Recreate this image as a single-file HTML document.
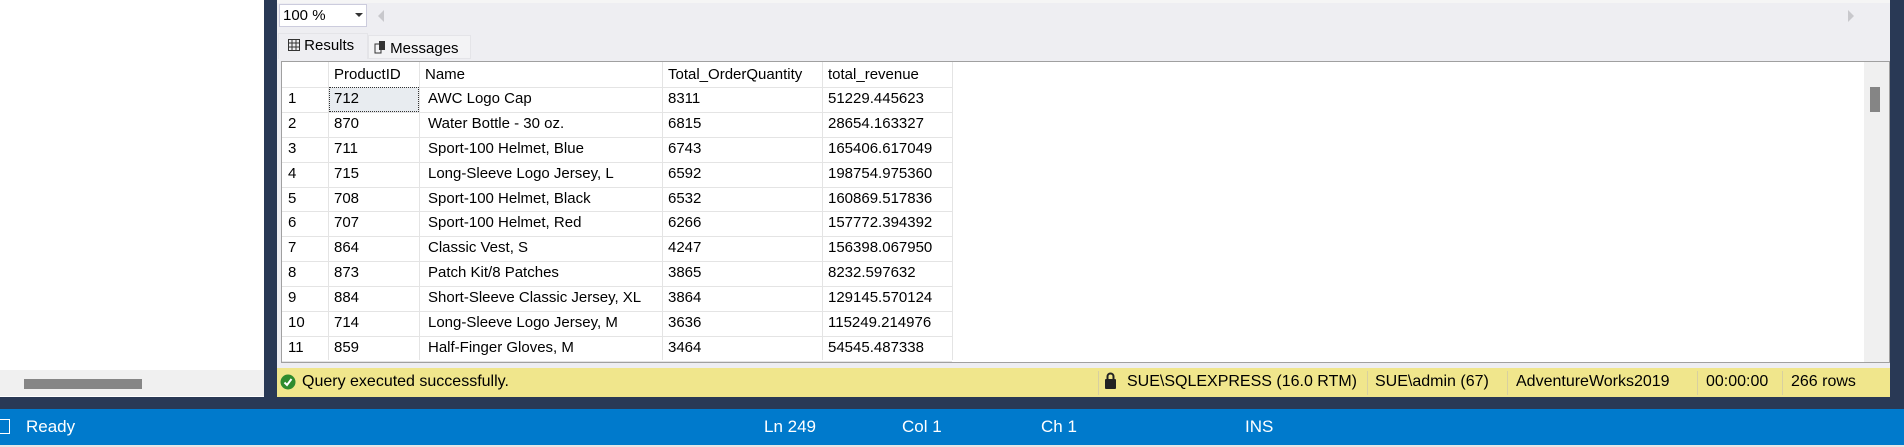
<!DOCTYPE html>
<html><head><meta charset="utf-8"><style>
*{margin:0;padding:0;box-sizing:border-box}
body{width:1904px;height:447px;overflow:hidden;background:#293955;font-family:"Liberation Sans",sans-serif;position:relative}
.a{position:absolute}
.cell{position:absolute;font-size:15px;color:#000;white-space:nowrap}
.st{position:absolute;top:373px;font-size:16px;white-space:nowrap}
</style></head><body>
<div class="a" style="left:0;top:0;width:264px;height:397px;background:#fff"></div>
<div class="a" style="left:0;top:370px;width:264px;height:26px;background:#f0f0f0"></div>
<div class="a" style="left:24px;top:379px;width:118px;height:10px;background:#868686"></div>
<div class="a" style="left:277px;top:0;width:1613px;height:397px;background:#eeeef2"></div>
<div class="a" style="left:277px;top:0;width:1613px;height:3px;background:#f5f5f5"></div>
<div class="a" style="left:279px;top:4px;width:88px;height:23px;background:#fff;border:1px solid #ccd;font-size:15px;padding:2px 3px">100 %</div>
<div class="a" style="left:355px;top:13px;width:0;height:0;border-left:4px solid transparent;border-right:4px solid transparent;border-top:4px solid #333"></div>
<div class="a" style="left:378px;top:10px;width:0;height:0;border-top:6px solid transparent;border-bottom:6px solid transparent;border-right:6px solid #c8c8cc"></div>
<div class="a" style="left:1848px;top:10px;width:0;height:0;border-top:6px solid transparent;border-bottom:6px solid transparent;border-left:6px solid #c8c8cc"></div>
<div class="a" style="left:278px;top:33px;width:90px;height:26px;background:#eeeef2;border:1px solid #e4e4e8;border-bottom:none;font-size:15px;padding:3px 0 0 9px">
<svg width="12" height="12" style="vertical-align:-1px"><rect x=".5" y=".5" width="11" height="11" fill="none" stroke="#333"/><path d="M0 4h12M0 8h12M4 0v12M8 0v12" stroke="#333"/></svg> Results</div>
<div class="a" style="left:368px;top:35px;width:103px;height:24px;background:#f3f3f5;border:1px solid #e4e4e8;font-size:15px;padding:4px 0 0 5px">
<svg width="12" height="13" style="vertical-align:-1px"><rect x="1" y="3" width="6" height="9" fill="none" stroke="#333"/><rect x="5" y="0" width="6" height="9" fill="#333"/></svg> Messages</div>
<div class="a" style="left:281px;top:61px;width:1609px;height:302px;background:#fff;border:1px solid #a0a0a0"></div>
<div class="a" style="left:1864px;top:62px;width:25px;height:300px;background:#f0f0f0"></div>
<div class="a" style="left:1870px;top:87px;width:10px;height:25px;background:#858585"></div>
<div id="g"></div>
<div class="a" style="left:277px;top:368px;width:1613px;height:29px;background:#f0e68c"></div>
<svg class="a" style="left:280px;top:374px" width="16" height="16"><circle cx="8" cy="8" r="7.5" fill="#2e8b2e"/><path d="M4.5 8.5l2.5 2.5 4.5-6" stroke="#fff" stroke-width="2" fill="none"/></svg>
<div class="st" style="left:302px">Query executed successfully.</div>
<svg class="a" style="left:1104px;top:372px" width="13" height="18"><rect x="1" y="7" width="11" height="10" rx="1" fill="#222"/><path d="M3.5 7V4.5a3 3 0 0 1 6 0V7" stroke="#222" stroke-width="2" fill="none"/></svg>
<div class="a" style="left:1098px;top:371px;width:1px;height:24px;background:#d8d0a0"></div>
<div class="st" style="left:1127px">SUE\SQLEXPRESS (16.0 RTM)</div>
<div class="a" style="left:1367px;top:371px;width:1px;height:24px;background:#d8d0a0"></div>
<div class="st" style="left:1375px">SUE\admin (67)</div>
<div class="a" style="left:1507px;top:371px;width:1px;height:24px;background:#d8d0a0"></div>
<div class="st" style="left:1516px">AdventureWorks2019</div>
<div class="a" style="left:1697px;top:371px;width:1px;height:24px;background:#d8d0a0"></div>
<div class="st" style="left:1706px">00:00:00</div>
<div class="a" style="left:1782px;top:371px;width:1px;height:24px;background:#d8d0a0"></div>
<div class="st" style="left:1791px">266 rows</div>
<div class="a" style="left:0;top:409px;width:1904px;height:36px;background:#007acc;color:#fff;font-size:17px">
<div class="a" style="left:0;top:10px;width:10px;height:15px;border:1.5px solid #fff;border-left:none"></div>
<div class="a" style="left:26px;top:8px">Ready</div>
<div class="a" style="left:764px;top:8px">Ln 249</div>
<div class="a" style="left:902px;top:8px">Col 1</div>
<div class="a" style="left:1041px;top:8px">Ch 1</div>
<div class="a" style="left:1245px;top:8px">INS</div>
</div>
<div class="a" style="left:0;top:445px;width:1904px;height:2px;background:#e6e6e6"></div>
<script>
var rows=[["712","AWC Logo Cap","8311","51229.445623"],["870","Water Bottle - 30 oz.","6815","28654.163327"],["711","Sport-100 Helmet, Blue","6743","165406.617049"],["715","Long-Sleeve Logo Jersey, L","6592","198754.975360"],["708","Sport-100 Helmet, Black","6532","160869.517836"],["707","Sport-100 Helmet, Red","6266","157772.394392"],["864","Classic Vest, S","4247","156398.067950"],["873","Patch Kit/8 Patches","3865","8232.597632"],["884","Short-Sleeve Classic Jersey, XL","3864","129145.570124"],["714","Long-Sleeve Logo Jersey, M","3636","115249.214976"],["859","Half-Finger Gloves, M","3464","54545.487338"]];
var xs=[282,328,419,662,822,952],h='',top0=62,rh=24.9;
function L(x,y,w,hh){h+='<div class="a" style="left:'+x+'px;top:'+y+'px;width:'+w+'px;height:'+hh+'px;background:#e4e4e4"></div>';}
for(var i=1;i<6;i++)L(xs[i],top0,1,298);
for(var r=0;r<=12;r++)L(282,Math.round(top0+rh*(r+1)),670,1);
var hd=["ProductID","Name","Total_OrderQuantity","total_revenue"];
for(var c=0;c<4;c++)h+='<div class="cell" style="left:'+(xs[c+1]+6)+'px;top:'+(top0+4)+'px">'+hd[c]+'</div>';
h+='<div class="a" style="left:329px;top:'+Math.round(top0+rh)+'px;width:90px;height:25px;background:#e8ecf0;border:1px dotted #333"></div>';
for(var r=0;r<rows.length;r++){var y=Math.round(top0+rh*(r+1)+3);
h+='<div class="cell" style="left:288px;top:'+y+'px">'+(r+1)+'</div>';
for(var c=0;c<4;c++)h+='<div class="cell" style="left:'+(xs[c+1]+(c==1?9:6))+'px;top:'+y+'px">'+rows[r][c]+'</div>';}
document.getElementById('g').innerHTML=h;
</script>
</body></html>
